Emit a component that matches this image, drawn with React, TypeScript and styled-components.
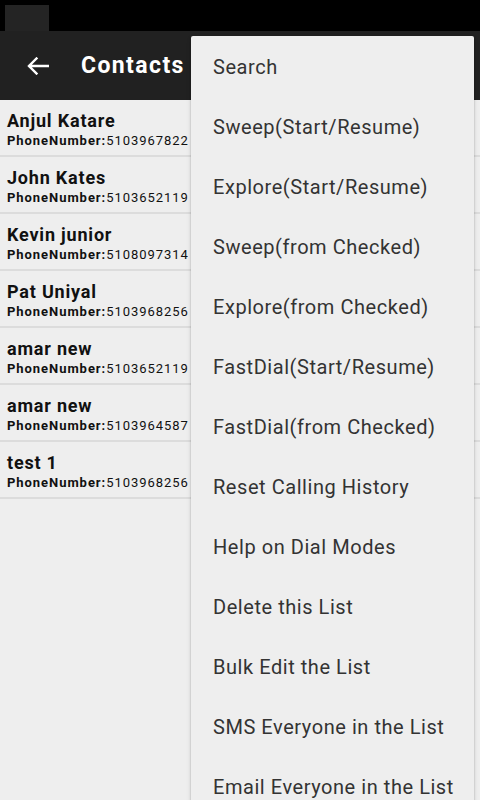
import React from "react";
import styled, { createGlobalStyle } from "styled-components";

const GlobalStyle = createGlobalStyle`
  html, body {
    margin: 0;
    padding: 0;
    background: #eeeeee;
    font-family: Roboto, "Noto Sans", "Liberation Sans", sans-serif;
  }
  #root { height: 800px; overflow: hidden; }
`;

const Screen = styled.div`
  position: relative;
  width: 480px;
  height: 800px;
  overflow: hidden;
  background: #eeeeee;
  display: flex;
  flex-direction: column;
`;

const StatusBar = styled.div`
  height: 31px;
  background: #000;
  display: flex;
  align-items: flex-end;
  padding-left: 5px;
  box-sizing: border-box;
`;

const StatusBlock = styled.div`
  width: 44px;
  height: 26px;
  background: #242424;
`;

const Toolbar = styled.div`
  height: 69px;
  background: #212121;
  display: flex;
  align-items: center;
  padding-left: 26px;
  box-sizing: border-box;
`;

const BackButton = styled.div`
  width: 24px;
  height: 24px;
  display: flex;
  align-items: center;
  justify-content: center;
  margin-right: 31px;
`;

const Title = styled.div`
  color: #ffffff;
  font-size: 23px;
  font-weight: 700;
  letter-spacing: 1.4px;
`;

const List = styled.div`
  display: flex;
  flex-direction: column;
`;

const Row = styled.div`
  height: 57px;
  box-sizing: border-box;
  padding: 10px 0 0 7px;
  border-bottom: 2px solid #dcdcdc;
  color: #111111;
  white-space: nowrap;
`;

const Name = styled.div`
  font-size: 18px;
  line-height: 22px;
  font-weight: 700;
  letter-spacing: 0.8px;
`;

const Phone = styled.div`
  font-size: 13px;
  line-height: 18px;
  letter-spacing: 0.95px;
`;

const PhoneLabel = styled.span`
  font-weight: 700;
`;

const Menu = styled.div`
  position: absolute;
  top: 36px;
  left: 191px;
  width: 283px;
  bottom: -40px;
  background: #eeeeee;
  border-radius: 2px;
  box-shadow: 0 1px 2px rgba(0, 0, 0, 0.25), 0 2px 5px rgba(0, 0, 0, 0.12);
  padding-top: 1px;
  display: flex;
  flex-direction: column;
`;

const MenuItem = styled.div`
  height: 60px;
  flex-shrink: 0;
  display: flex;
  align-items: center;
  padding-left: 22px;
  font-size: 20px;
  letter-spacing: 0.55px;
  color: #333333;
  white-space: nowrap;
`;

const contacts = [
  { name: "Anjul Katare", phone: "5103967822" },
  { name: "John Kates", phone: "5103652119" },
  { name: "Kevin junior", phone: "5108097314" },
  { name: "Pat Uniyal", phone: "5103968256" },
  { name: "amar new", phone: "5103652119" },
  { name: "amar new", phone: "5103964587" },
  { name: "test 1", phone: "5103968256" },
];

const menuItems = [
  "Search",
  "Sweep(Start/Resume)",
  "Explore(Start/Resume)",
  "Sweep(from Checked)",
  "Explore(from Checked)",
  "FastDial(Start/Resume)",
  "FastDial(from Checked)",
  "Reset Calling History",
  "Help on Dial Modes",
  "Delete this List",
  "Bulk Edit the List",
  "SMS Everyone in the List",
  "Email Everyone in the List",
];

export default function App() {
  return (
    <>
      <GlobalStyle />
      <Screen>
        <StatusBar>
          <StatusBlock />
        </StatusBar>
        <Toolbar>
          <BackButton>
            <svg width="22" height="18" viewBox="0 0 22 18" fill="none">
              <path
                d="M21 9H2.5M9.5 1.5L2 9l7.5 7.5"
                stroke="#ffffff"
                strokeWidth="2.4"
                strokeLinecap="square"
              />
            </svg>
          </BackButton>
          <Title>Contacts</Title>
        </Toolbar>
        <List>
          {contacts.map((c, i) => (
            <Row key={i}>
              <Name>{c.name}</Name>
              <Phone>
                <PhoneLabel>PhoneNumber:</PhoneLabel>
                {c.phone}
              </Phone>
            </Row>
          ))}
        </List>
        <Menu>
          {menuItems.map((m) => (
            <MenuItem key={m}>{m}</MenuItem>
          ))}
        </Menu>
      </Screen>
    </>
  );
}
